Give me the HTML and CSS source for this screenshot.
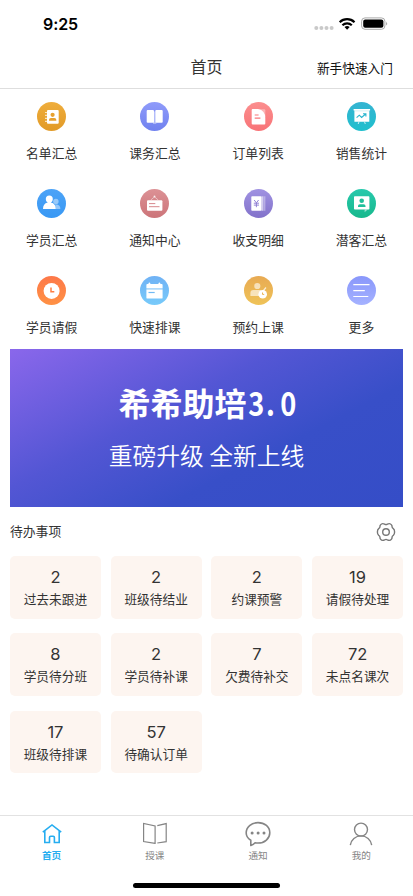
FILE: index.html
```html
<!DOCTYPE html>
<html lang="zh-CN">
<head>
<meta charset="utf-8">
<meta name="viewport" content="width=device-width, initial-scale=1">
<title>首页</title>
<link rel="stylesheet" href="styles.css">
</head>
<body>
<div class="app">
  <div class="status">
    <span class="time">9:25</span>
    <svg class="status-icons" width="76" height="16" viewBox="0 0 76 16">
      <g fill="#c9c9c9"><circle cx="3.3" cy="12" r="2"/><circle cx="8.4" cy="12" r="2"/><circle cx="13.5" cy="12" r="2"/><circle cx="18.6" cy="12" r="2"/></g>
      <g fill="none" stroke="#000" stroke-width="2.2"><path d="M26.7 6.2a10.6 10.6 0 0 1 14.8 0"/><path d="M29.4 9.2a6.8 6.8 0 0 1 9.4 0"/></g>
      <path d="M34.1 13.7l-2.6-2.6a3.8 3.8 0 0 1 5.2 0z"/>
      <rect x="48.6" y="1.9" width="23.3" height="11.4" rx="3.4" fill="none" stroke="#aaa"/>
      <rect x="50.2" y="3.4" width="20.2" height="8.4" rx="2"/>
      <path d="M73.2 5.6q1.8 2 0 4z" fill="#999"/>
    </svg>
  </div>
  <header class="header">
    <span></span>
    <h1>首页</h1>
    <a class="guide">新手快速入门</a>
  </header>

  <main>
    <nav class="menu">
      <div class="menu-item"><span class="icon amber"><svg viewBox="0 0 29 29"><rect x="10" y="8" width="11.7" height="13.8" rx="1" fill="#fff"/><path d="M8 10.5h2M8 13.4h2M8 16.4h2M8 19.3h2" stroke="#fff" stroke-opacity=".7" stroke-width="1.2"/><circle cx="15.6" cy="12.8" r="2.1" fill="#e7a12f"/><path d="M12 18.7v-1q0-1.7 2-1.7h3.3q2 0 2 1.7v1z" fill="#e7a12f"/></svg></span>名单汇总</div>
      <div class="menu-item"><span class="icon indigo"><svg viewBox="0 0 29 29"><path d="M6.7 9q0-.9 1-.9h5.2q1.1 0 1.1 1V20.8H7.7q-1 0-1-.8zM15.3 9.100q0-1 1.100-1h5.300q1 0 1 .9v11q0 .8-1 .8h-6.400z" fill="#fff"/><path d="M14.650 9.500v11.500M13 21.300h3.300" stroke="#fff" stroke-opacity=".6" stroke-width=".8"/></svg></span>课务汇总</div>
      <div class="menu-item"><span class="icon coral"><svg viewBox="0 0 29 29"><path d="M14 7.200h6.300q1 0 1 1v7z" fill="#fff" fill-opacity=".38"/><path d="M8.700 7.100h5.300q7.300 1.400 7.300 9v5.500q0 1-1 1H8.700q-1 0-1-1V8.100q0-1 1-1z" fill="#fff"/><path d="M10.700 13h3.900M10.700 16.100h5.700" stroke="#f7777a" stroke-width="1.1"/></svg></span>订单列表</div>
      <div class="menu-item"><span class="icon cyan"><svg viewBox="0 0 29 29"><path d="M6.600 7h16.500v1.600h-.8v11.200H7.400V8.600h-.8z" fill="#fff"/><path d="M7.400 8.900h14.900" stroke="#96dce6" stroke-width=".4"/><path d="M12 19.800l-.8 2.200M17.500 19.800l.8 2.200" stroke="#fff" stroke-opacity=".75"/><path d="M9.600 15.700l2.700-2.500 2.300 2.300 4-3.500M16 11.700h2.900v2.900" stroke="#28b5ce" stroke-width="1.100" fill="none"/></svg></span>销售统计</div>
      <div class="menu-item"><span class="icon blue"><svg viewBox="0 0 29 29"><g fill="#fff" fill-opacity=".45"><circle cx="18.900" cy="12.500" r="2.700"/><path d="M18.200 15.500q5.200-.4 5.200 4.600h-4.500z"/></g><circle cx="12.300" cy="9.900" r="3.500" fill="#fff"/><path d="M10.600 12h3.400v1.600q4.800 1 4.800 6.500H6q0-5.500 4.600-6.500z" fill="#fff"/></svg></span>学员汇总</div>
      <div class="menu-item"><span class="icon rose"><svg viewBox="0 0 29 29"><path d="M10.800 11l3.700-3.200 3.700 3.200" stroke="#fff" stroke-opacity=".6" fill="none" stroke-width=".8"/><circle cx="14.500" cy="7.600" r="1" fill="#fff" fill-opacity=".8"/><rect x="7" y="11.200" width="15.400" height="10.600" rx="1" fill="#fff"/><path d="M9 14.600h6.300M9 17.700h10.500" stroke="#d27a80" stroke-width=".9"/></svg></span>通知中心</div>
      <div class="menu-item"><span class="icon violet"><svg viewBox="0 0 29 29"><rect x="7.300" y="7.300" width="10.200" height="14.500" rx=".8" fill="#fff"/><path d="M17.500 7.300h1.900v14.500h-1.900z" fill="#fff" fill-opacity=".6"/><path d="M19.800 7.300h1.600v14.500h-1.600z" fill="#fff" fill-opacity=".35"/><path d="M10.200 11l2.200 2.900 2.200-2.900M9.800 14.200h5.200M9.800 16.100h5.200M12.400 14v4.200" stroke="#8877d1" stroke-width=".9" fill="none"/></svg></span>收支明细</div>
      <div class="menu-item"><span class="icon green"><svg viewBox="0 0 29 29"><rect x="7" y="7.300" width="15.400" height="13.300" rx=".8" fill="#fff"/><path d="M17.600 20.600h3.100l-3.100 2.600z" fill="#fff" fill-opacity=".55"/><circle cx="14.700" cy="11.800" r="2.300" fill="#1fc09b"/><path d="M11 17.900v-.8q0-1.800 1.900-1.800h3.700q1.900 0 1.900 1.800v.8z" fill="#1fc09b"/></svg></span>潜客汇总</div>
      <div class="menu-item"><span class="icon orange"><svg viewBox="0 0 29 29"><circle cx="14.600" cy="14.900" r="8" fill="#fff"/><path d="M14 11.500v4.300h3.300" stroke="#ff7e42" stroke-width="1.500" fill="none"/></svg></span>学员请假</div>
      <div class="menu-item"><span class="icon sky"><svg viewBox="0 0 29 29"><path d="M6.400 12.200V9q0-.9.900-.9H8.500V6.900q.9-.7 1.800 0v1.200h8.200V6.900q.9-.7 1.800 0v1.200h1.400q.9 0 .9.900v3.200z" fill="#fff"/><path d="M6.400 12.200h16.200v1.300H6.400z" fill="#fff" fill-opacity=".3"/><path d="M6.400 13.500h16.200v8.200q0 .9-.9.900H7.300q-.9 0-.9-.9z" fill="#fff"/><path d="M8.500 16.500h6.200" stroke="#70baf4" stroke-width="1.200"/></svg></span>快速排课</div>
      <div class="menu-item"><span class="icon gold"><svg viewBox="0 0 29 29"><g fill="#fff" fill-opacity=".6"><circle cx="13.300" cy="10" r="3.100"/><path d="M6.400 20.100v-3.200q0-2.900 3-2.900h7.600v6.100z"/></g><path d="M19.100 15l2.900-3.500" stroke="#fff" stroke-opacity=".75" stroke-width="1.200"/><circle cx="18.700" cy="18.200" r="4.300" fill="#fff"/><path d="M18.500 16.500v1.900h1.700" stroke="#eab553" fill="none"/></svg></span>预约上课</div>
      <div class="menu-item"><span class="icon peri"><svg viewBox="0 0 29 29"><path d="M6.300 8.700h16.200M6.300 14.700h11.500M6.300 20.500h15" stroke="#fff" stroke-width="1.200"/></svg></span>更多</div>
    </nav>

    <section class="banner">
      <h2>希希助培<span class="digits"><i>3</i><i class="dot">.</i><i>0</i></span></h2>
      <p>重磅升级 全新上线</p>
    </section>

    <section class="todo">
      <div class="todo-head">
        <h3>待办事项</h3>
        <svg width="20" height="20" viewBox="0 0 20 20" fill="none" stroke="#777" stroke-width="1.400"><path d="M8.600 2.200Q10 3.100 11.400 2.200Q13.900 .8 15.500 2.900Q16.100 3.600 16 4.600Q16 6 17.300 6.700Q18.600 7.600 18.600 10Q18.600 12.400 17.300 13.300Q16 14 16 15.400Q16.100 16.400 15.500 17.100Q13.900 19.200 11.400 17.800Q10 16.900 8.600 17.800Q6.100 19.200 4.500 17.100Q3.900 16.400 4 15.400Q4 14 2.700 13.300Q1.400 12.400 1.400 10Q1.400 7.600 2.700 6.700Q4 6 4 4.600Q3.900 3.600 4.500 2.900Q6.100 .8 8.600 2.200Z" stroke-linejoin="round"/><circle cx="10" cy="10" r="3.300"/></svg>
      </div>
      <div class="cards">
        <div class="card"><b>2</b><span>过去未跟进</span></div>
        <div class="card"><b>2</b><span>班级待结业</span></div>
        <div class="card"><b>2</b><span>约课预警</span></div>
        <div class="card"><b>19</b><span>请假待处理</span></div>
        <div class="card"><b>8</b><span>学员待分班</span></div>
        <div class="card"><b>2</b><span>学员待补课</span></div>
        <div class="card"><b>7</b><span>欠费待补交</span></div>
        <div class="card"><b>72</b><span>未点名课次</span></div>
        <div class="card"><b>17</b><span>班级待排课</span></div>
        <div class="card"><b>57</b><span>待确认订单</span></div>
      </div>
    </section>
  </main>

  <footer class="tabs">
    <div class="tab active"><svg width="26" height="26" viewBox="0 0 26 26"><path d="M3.800 11.200L13 3.900l9.200 7.300M5.800 10v11.500h4.700v-5q0-1.200 1.200-1.200h2.500q1.200 0 1.200 1.200v5h4.800V10" stroke-width="1.600"/></svg>首页</div>
    <div class="tab"><svg width="26" height="26" viewBox="0 0 26 26"><path d="M13.100 22.400L1.600 20.500V2.400L13.100 4.900ZM15.300 4.700l8.900-2.100v18.100l-8.900 1.300" stroke-width="1.200"/></svg>授课</div>
    <div class="tab"><svg width="26" height="26" viewBox="0 0 26 26"><path d="M5.800 19.200C2.800 17.300 1.200 14.900 1.200 11.900 1.200 6 6.300 1.600 13 1.600s11.800 4.300 11.800 10.100S19.700 22 13 22q-1.500 0-2.900-.3-1.600 1.700-4.300 2.700z" stroke-width="1.600" stroke-linejoin="round"/><g fill="#858585" stroke="none"><circle cx="7.100" cy="12" r="1.500"/><circle cx="13.100" cy="12" r="1.500"/><circle cx="19" cy="12" r="1.500"/></g></svg>通知</div>
    <div class="tab"><svg width="26" height="26" viewBox="0 0 26 26"><circle cx="13" cy="8.600" r="6.500" stroke-width="1.400"/><path d="M2.300 24.200a10.800 10.800 0 0 1 21.400 0" stroke-width="1.400"/></svg>我的</div>
  </footer>
  <div class="home-bar"></div>
</div>
</body>
</html>
```

FILE: styles.css
```css
* { box-sizing: border-box; }
body, h1, h2, h3, p { margin: 0; font-weight: 400; }
body {
  background: #fff;
  color: #333;
  font-family: Inter, "Noto Sans CJK SC", sans-serif;
}
.app {
  display: flex;
  flex-direction: column;
  width: 413px;
  height: 896px;
  overflow: hidden;
}
.status {
  display: flex;
  justify-content: space-between;
  align-items: center;
  height: 47px;
  padding: 0 24px 0 43px;
}
.time { font-size: 16px; font-weight: 600; line-height: 20px; color: #000; letter-spacing: -0.1px; }
.header {
  display: grid;
  grid-template-columns: 1fr auto 1fr;
  align-items: center;
  height: 42px;
  padding: 0 20px 1px;
  border-bottom: 1px solid #dedede;
}
.header h1 { font-size: 16px; line-height: 20px; }
.guide { justify-self: end; padding-top: 3px; font-size: 12.7px; line-height: 18px; color: #111; }

.menu { display: grid; grid-template-columns: repeat(4, 1fr); grid-template-rows: 87px 87px 73px; padding-top: 13px; }
.menu-item { display: flex; flex-direction: column; align-items: center; font-size: 12.8px; line-height: 18px; }
.icon { width: 29px; height: 29px; margin-bottom: 14px; border-radius: 50%; }
.icon svg { display: block; }
.amber { background: linear-gradient(#efad3c, #e19a27); }
.indigo { background: linear-gradient(#8f9bfa, #7081ef); }
.coral { background: linear-gradient(#fb8e8e, #f87377); }
.cyan { background: linear-gradient(#35b4d2, #1fbfcd); }
.blue { background: linear-gradient(#4ca3f7, #3898f4); }
.rose { background: linear-gradient(#dc9195, #cc7479); }
.violet { background: linear-gradient(#a092e2, #8272ca); }
.green { background: linear-gradient(#27c9ac, #17b88c); }
.orange { background: linear-gradient(#fd7849, #ff9144); }
.sky { background: linear-gradient(#70b2f5, #77cafa); }
.gold { background: linear-gradient(#e8aa53, #efc358); }
.peri { background: linear-gradient(#8997fb, #a5b2ff); }

.banner {
  height: 158px;
  margin: 0 10px;
  padding-top: 32px;
  background: linear-gradient(153deg, #8a67eb 0%, #5356d4 39%, #384fc8 66%, #354dc7 100%);
  color: #fff;
  text-align: center;
}
.banner h2 {
  display: flex;
  justify-content: center;
  font-family: "Noto Sans CJK SC", sans-serif;
  font-size: 32px;
  font-weight: 700;
  line-height: 42px;
}
.digits { display: flex; }
.digits i { width: 16px; font-style: normal; transform: scaleX(.85); }
.digits .dot { padding-left: 2px; text-align: left; }
.banner p {
  margin-top: 14px;
  font-family: "Noto Sans CJK SC", sans-serif;
  font-size: 23.8px;
  font-weight: 350;
  line-height: 36px;
}

.todo { padding: 0 10px; }
.todo-head { display: flex; align-items: center; justify-content: space-between; height: 49px; padding-right: 7px; }
.todo-head h3 { font-size: 12.8px; line-height: 18px; }
.cards { display: grid; grid-template-columns: repeat(4, 1fr); grid-auto-rows: 62.500px; gap: 14.800px 9.900px; }
.card {
  display: flex;
  flex-direction: column;
  align-items: center;
  padding-top: 11px;
  border-radius: 5px;
  background: #fdf5f0;
}
.card b { font-size: 16.500px; font-weight: 400; line-height: 21px; }
.card span { margin-top: 3px; font-size: 12.700px; line-height: 18px; }

.tabs {
  display: grid;
  grid-template-columns: repeat(4, 1fr);
  height: 68px;
  margin-top: auto;
  padding-top: 5px;
  border-top: 1px solid #e2e2e2;
}
.tab { display: flex; flex-direction: column; align-items: center; font-size: 9.600px; line-height: 14px; color: #858585; }
.tab svg { margin-bottom: 2px; fill: none; stroke: #858585; }
.active { color: #26adf0; font-weight: 700; }
.active svg { stroke: #26adf0; }
.home-bar { width: 147px; height: 5px; margin: 0 auto 8px; border-radius: 3px; background: #000; }
```
